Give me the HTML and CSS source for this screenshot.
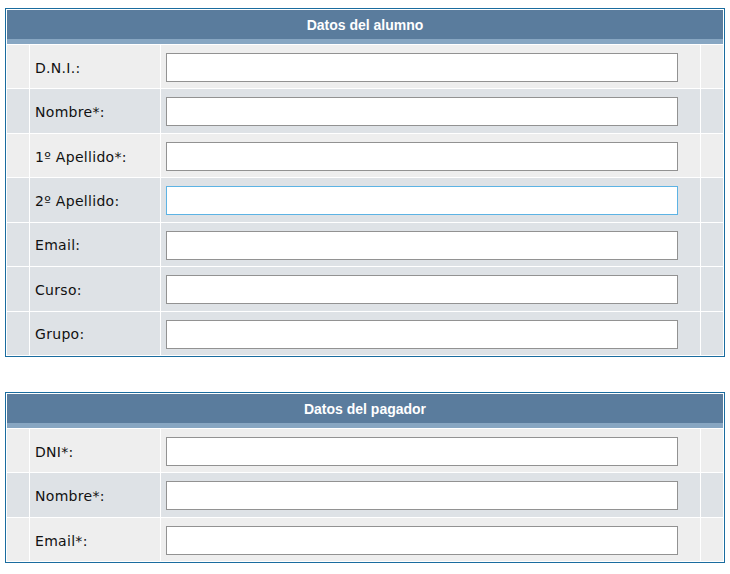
FILE: index.html
```html
<!DOCTYPE html>
<html lang="es">
<head>
<meta charset="utf-8">
<title>Datos</title>
<link rel="stylesheet" href="styles.css">
</head>
<body>
<section class="panel">
  <div class="panel-head">Datos del alumno</div>
  <div class="row odd"><div class="cell"></div><div class="cell label">D.N.I.:</div><div class="cell field"><input class="input" type="text"></div><div class="cell"></div></div>
  <div class="row even"><div class="cell"></div><div class="cell label">Nombre*:</div><div class="cell field"><input class="input" type="text"></div><div class="cell"></div></div>
  <div class="row odd"><div class="cell"></div><div class="cell label">1º Apellido*:</div><div class="cell field"><input class="input" type="text"></div><div class="cell"></div></div>
  <div class="row even"><div class="cell"></div><div class="cell label">2º Apellido:</div><div class="cell field"><input class="input input-focus" type="text"></div><div class="cell"></div></div>
  <div class="row even"><div class="cell"></div><div class="cell label">Email:</div><div class="cell field"><input class="input" type="text"></div><div class="cell"></div></div>
  <div class="row even"><div class="cell"></div><div class="cell label">Curso:</div><div class="cell field"><input class="input" type="text"></div><div class="cell"></div></div>
  <div class="row even"><div class="cell"></div><div class="cell label">Grupo:</div><div class="cell field"><input class="input" type="text"></div><div class="cell"></div></div>
</section>

<section class="panel panel-second">
  <div class="panel-head">Datos del pagador</div>
  <div class="row odd"><div class="cell"></div><div class="cell label">DNI*:</div><div class="cell field"><input class="input" type="text"></div><div class="cell"></div></div>
  <div class="row even"><div class="cell"></div><div class="cell label">Nombre*:</div><div class="cell field"><input class="input" type="text"></div><div class="cell"></div></div>
  <div class="row odd"><div class="cell"></div><div class="cell label">Email*:</div><div class="cell field"><input class="input" type="text"></div><div class="cell"></div></div>
</section>
</body>
</html>
```
FILE: styles.css
```css
html, body {
  background: #ffffff;
}
body {
  margin: 8px 5px;
  font-family: "DejaVu Sans", Verdana, sans-serif;
}
.panel {
  width: 720px;
  box-sizing: border-box;
  border: 1px solid #1a6c9f;
  padding: 1px;
  background: #ffffff;
  display: flex;
  flex-direction: column;
  gap: 1px;
}
.panel-second {
  margin-top: 35px;
}
.panel-head {
  height: 29px;
  border-bottom: 5px solid #87a6c2;
  background: #5a7c9d;
  color: #ffffff;
  font-family: "Liberation Sans", Arial, sans-serif;
  font-weight: bold;
  font-size: 14px;
  display: flex;
  align-items: center;
  justify-content: center;
  padding-top: 1px;
  box-sizing: border-box;
  height: 34px;
}
.row {
  display: grid;
  grid-template-columns: 22px 130px 539px 22px;
  column-gap: 1px;
  height: 43.43px;
}
.row.odd .cell { background: #eeeeee; }
.row.even .cell { background: #dee2e6; }
.label {
  display: flex;
  align-items: center;
  padding: 2px 0 0 5px;
  font-size: 14px;
  letter-spacing: 0.3px;
  color: #111111;
}
.field {
  padding: 8px 0 0 5px;
  box-sizing: border-box;
}
.input {
  display: block;
  width: 512px;
  height: 29px;
  box-sizing: border-box;
  margin: 0;
  padding: 2px 4px;
  border: 1px solid #929292;
  background: #ffffff;
  outline: none;
  font-family: "DejaVu Sans", sans-serif;
  font-size: 13px;
}
.input-focus {
  border-color: #5db3e4;
}
```
